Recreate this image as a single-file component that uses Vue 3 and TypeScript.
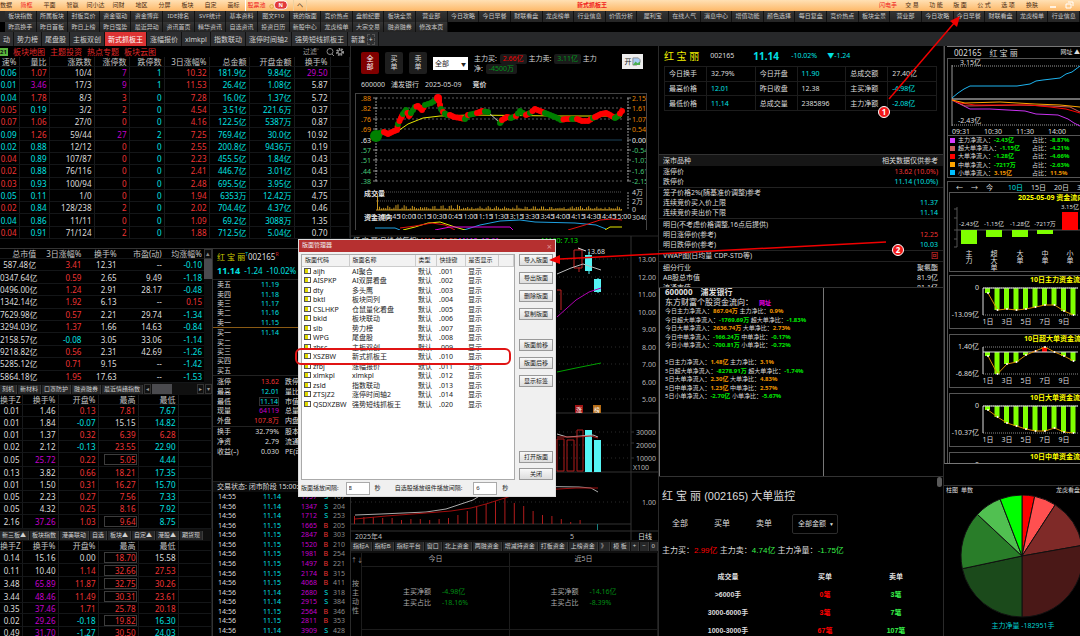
<script setup lang="ts">
import { ref } from 'vue'

interface Cell { tone: string; text: string }
interface Board { name: string; widths: number[]; heads: string[]; rows: Cell[][] }

const tones: Record<string, string> = { r: 'up', c: 'down', p: 'hot', w: 'flat', b: 'up boxed' }
const parse = (src: string): Cell[][] =>
  src.trim().split('\n').map((line) =>
    line.trim().split(' ').map((s) => ({ tone: tones[s[0]], text: s.slice(1) })),
  )

const menu = ['简框', '平面', '智赢', '问小达', '问财', '地区', '分屏', '板块', '自定', '画标']
const menuRight = ['交 易', '功 能', '版 面', '公 式', '选 项', '换肤']

const links1 = [
  '板块指数', '所属板块', '封板竞价', '资金驱动', '资金博弈', 'IDE排名', 'SVF统计', '基本资料', '图文F10', '我的版面',
  '竞价热点', '盘前纪要', '板块全景', '营业部', '今日攻略', '今日早餐', '财联看盘', '龙虎榜单', '行业信息', '价值分析',
  '犀利宝', '在线人气', '消息中心', '增值功能', '颜色选择', '每日复盘', '竞价热点', '板块全景', '营业部', '今日攻略',
  '今日早餐', '财联看盘', '龙虎榜单', '行业信息',
]
const links2 = [
  '昨高换手', '昨日首板', '昨日上榜', '昨日强势', '最近异动', '资讯首页', '精华资讯', '自选资讯', '投资日历', '新股中心',
  '龙虎榜单', '大宗交易', '融资融券', '修改本页',
]
const pages = ['动', '势力榜', '尾盘股', '主板双创', '新式抓板王', '涨幅报价', 'xlmkpl', '指数联动', '涨停时间轴2', '强势短线抓板王']
const activePage = ref('新式抓板王')

const sectorBoard: Board = {
  name: '板块排行',
  widths: [19, 30, 45, 35, 35, 45, 40, 45, 36],
  heads: ['速%', '量比', '涨跌数', '涨停数', '跌停数', '3日涨幅%', '总金额', '开盘金额', '换手%'],
  rows: parse(`
    c0.06 r1.07 w10/4 p7 c1 r10.32 c181.9亿 c9.84亿 p29.50
    c0.01 p3.46 w17/3 p9 c1 r11.53 c26.4亿 c1.08亿 w5.87
    c0.04 r1.78 w8/3 r3 c0 r7.28 c16.0亿 c1.37亿 w5.72
    r0.05 c0.19 w3/2 r2 c0 r4.54 c3.51亿 c221.6万 w0.37
    r0.07 r1.06 w27/0 r0 c0 r4.16 c122.5亿 c5387万 w0.87
    c0.09 r1.26 w59/44 p27 c2 r7.25 c769.4亿 c30.0亿 w10.92
    c0.02 c0.88 w12/12 r0 c0 r2.55 c200.8亿 c9436万 w0.19
    r0.04 c0.89 w107/87 r0 c0 r2.23 c455.5亿 c1.84亿 w0.43
    r0.02 c0.88 w76/116 r0 c0 r2.41 c446.7亿 c3.01亿 w0.43
    r0.03 c0.93 w100/94 r0 c0 r2.48 c695.5亿 c3.95亿 w0.37
    c0.05 c0.11 w1/0 r0 c0 r1.94 c6353万 c12.42万 w4.75
    r0.02 c0.84 w128/238 r2 c0 r2.02 c704.4亿 c4.37亿 w0.46
    c0.04 c0.86 w11/11 r0 c0 r1.09 c69.2亿 c3088万 w1.35
    r0.04 c0.91 w71/124 r2 c0 r1.88 c712.5亿 c5.04亿 w0.70`),
}

const indexBoard: Board = {
  name: '指数',
  widths: [38, 45, 35, 45, 40],
  heads: ['总市值', '3日涨幅%', '换手%', '市盈(动)', '均涨幅%'],
  rows: parse(`
    w587.48亿 r3.41 w12.31 w-- c-0.10
    w0347.64亿 r0.59 w2.65 w9.49 c-1.18
    w0496.00亿 r1.24 w2.91 w28.17 c-0.48
    w1342.14亿 r1.92 w6.13 w-- r0.15
    w7629.98亿 r0.57 w2.21 w29.74 c-1.34
    w3294.03亿 r1.37 w1.66 w14.63 c-0.84
    w2158.57亿 c-0.08 w3.05 w33.06 c-1.14
    w9218.82亿 r0.56 w2.31 w42.69 c-1.26
    w5285.12亿 r0.71 w9.15 w-- c-1.42
    w5864.18亿 r1.95 w17.63 w-- c-1.53`),
}

const turnoverWidths = [22, 36, 40, 40, 40]
const turnoverHeads = ['换手Z', '换手%', '开盘%', '最高', '最低']
const conceptBoard: Board = {
  name: '概念股',
  widths: turnoverWidths,
  heads: turnoverHeads,
  rows: parse(`
    w0.01 w1.46 r0.13 r7.81 c7.67
    w0.01 w1.84 c-0.07 w15.15 c14.82
    w0.01 w1.37 r0.32 r6.39 r6.28
    w0.02 w2.12 c-0.13 r23.55 c22.90
    w0.05 p25.72 r0.22 b5.05 c4.44
    w0.13 w3.82 r0.66 r18.21 c17.35
    w0.01 w1.50 r0.31 r16.27 c15.70
    w0.05 w2.23 r0.27 r7.56 c7.33
    w0.05 w4.32 r0.25 r8.16 c7.92
    w2.16 p37.26 r1.03 b9.64 c8.75`),
}
const watchBoard: Board = {
  name: '自选股',
  widths: turnoverWidths,
  heads: turnoverHeads,
  rows: parse(`
    w0.14 w15.16 w0.00 b18.70 w15.58
    w0.11 w10.40 r1.14 b32.66 r27.53
    w3.48 p65.89 r11.87 b32.75 r30.26
    w3.44 p48.46 r11.49 b30.31 r23.61
    w0.35 p37.46 r1.71 r25.78 r20.18
    w0.02 p29.26 c-0.18 b19.82 c16.30
    w0.49 p31.70 c-1.27 r30.50 c24.03`),
}
const lowerBoards = [
  { board: indexBoard, tabs: ['刻机', '新材料', '口罩防护', '融资融券', '最近情绪指数'], scroll: true },
  { board: conceptBoard, tabs: ['新三板▲', '板块指数', '港美联动', '自选', '板块▲', '自定▲', '港股▲', '期货现'], scroll: false },
  { board: watchBoard, tabs: [] as string[], scroll: false },
]

const asks = [['卖五', '11.19'], ['卖四', '11.18'], ['卖三', '11.17'], ['卖二', '11.16'], ['卖一', '11.15']]
const bids = [['买一', '11.14'], ['买二', ''], ['买三', ''], ['买四', ''], ['买五', '']]
const stats1 = [
  ['涨停', '13.62', 'up', '跌停'], ['最高', '12.01', 'down', '量比'], ['最低', '11.14', 'down boxed', '市值'],
  ['现量', '64119', 'hot', '总量'], ['外盘', '107.8万', 'up', '内盘'],
]
const stats2 = [['换手', '32.79%', 'flat', '股本'], ['净资', '2.79', 'flat', '流通'], ['收益(–)', '0.030', 'flat', 'PE(动)']]
const ticks = [
  ['14:55', '11.14', '1757', 'S', '167'], ['14:56', '11.14', '1347', 'S', '204'], ['14:56', '11.14', '1712', 'S', '253'],
  ['14:56', '11.15', '1665', 'B', '205'], ['14:56', '11.15', '2847', 'B', '303'], ['14:56', '11.15', '1520', 'B', '210'],
  ['14:56', '11.15', '1981', 'B', '254'], ['14:56', '11.15', '1497', 'B', '221'], ['14:56', '11.15', '2174', 'B', '315'],
  ['14:56', '11.15', '4068', 'B', '411'], ['14:56', '11.14', '2680', 'S', '318'], ['14:56', '11.14', '2915', 'S', '384'],
  ['14:56', '11.15', '2564', 'B', '346'], ['14:56', '11.15', '2811', 'B', '353'], ['14:56', '11.14', '3909', 'S', '428'],
]

// Intraday price trace: way points joined by overlapping trade dots
type Way = [number, number, string]
const R = '#ff0000'
const G = '#008000'
const ways: Way[] = [
  [376, 136, G], [380, 133, G], [384, 132, R], [388, 134, R], [392, 132, R], [397, 130, R], [398, 124, G], [401, 118, R],
  [403, 114, G], [406, 110, G], [409, 116, R], [411, 113, G], [415, 107, G], [418, 106, R], [422, 110, R], [425, 105, G],
  [431, 103, G], [436, 100, G], [438, 98, R], [439, 101, R], [441, 109, G], [443, 112, R], [447, 115, G], [450, 115, R],
  [454, 117, R], [460, 118, R], [465, 119, G], [468, 115, R], [473, 114, G], [477, 113, R], [482, 111, R], [488, 112, G],
  [500, 123, G], [502, 120, R], [507, 117, R], [511, 118, G], [516, 116, R], [520, 111, G], [526, 115, R], [530, 113, G],
  [535, 109, R], [540, 111, R], [545, 113, G], [550, 115, G], [555, 117, G], [561, 120, G], [566, 119, R], [572, 119, G],
  [577, 119, R], [582, 121, R], [588, 121, R], [593, 118, G], [597, 116, R], [601, 114, R], [606, 113, R], [610, 115, R],
  [615, 118, G], [618, 116, G], [622, 111, R],
]
const dots = ways.flatMap(([x, y, c], i) => {
  const n = ways[i + 1]
  const out = [{ x, y, c, r: i === 0 ? 6 : i === 18 ? 4 : 3 }]
  if (n && n[0] - x < 8) out.push({ x: (x + n[0]) / 2, y: (y + n[1]) / 2, c: i % 3 ? c : n[2], r: 3 })
  return out
})
const gridLabels = [
  [98, '.88', '2.15', '#e88600'], [108, '.82', '1.61', '#e88600'], [119, '.76', '1.07', '#e88600'], [129, '.69', '0.54', '#e88600'],
  [140, '.63', '0.00', '#eeeeee'], [150, '.57', '-0.54', '#46c878'], [160, '.51', '-1.07', '#46c878'], [171, '.44', '-1.61', '#46c878'],
  [181, '.38', '-2.15', '#46c878'],
] as [number, string, string, string][]
const times = ['09:30', '09:45', '10:00', '10:15', '10:30', '10:45', '11:00', '11:15', '11:30', '13:15', '13:30', '13:45', '14:00', '14:15', '14:30', '14:45', '15:00']
const volumes = Array.from({ length: 120 }, (_, i) => {
  const wave = Math.abs(Math.sin(i * 2.3) * Math.cos(i * 0.7))
  return { x: 377 + i * 2.05, h: i === 0 ? 16 : 1 + wave * (i < 45 ? 4 : 3) + (i % 29 === 10 ? 2 : 0) }
})

const prices = ['13.00', '12.00', '11.00', '10.00', '9.00', '8.00', '7.00', '6.00', '5.00']
const macd = [8, 7, 7, 6, 6, 4, 5, 5, 4, 5, 6, 9, 13, 17, 20, 23, 26, 21, 18, 13, 9, 8, 5, 2, 4]
const funds = ['指标A', '指标B', '指标平台', '窗口', '北上资金', '两融资金', '增减持资金', '打板资金', '上榜资金', '》']
const fundDays = [
  { day: '今日', net: '-4.98亿', ratio: '-18.16%' },
  { day: '近5日', net: '-14.16亿', ratio: '-8.39%' },
]

const summary = [
  [['今日换手', '32.79%', 'flat'], ['今日开盘', '11.90', 'down'], ['总成交额', '27.40亿', 'flat']],
  [['最高价格', '12.01', 'down'], ['昨日收盘', '12.38', 'flat'], ['主买净额', '-4.98亿', 'down']],
  [['最低价格', '11.14', 'down'], ['总成交量', '2385896', 'flat'], ['主力净额', '-2.08亿', 'down']],
]
const rules = [
  [['涨停价', '13.62 (10.0%)', 'up'], ['跌停价', '11.14 (10.0%)', 'down']],
  [['笼子价格2%(随基准价调整)参考', '', ''], ['连续竞价买入价上限', '11.37', 'down'], ['连续竞价卖出价下限', '11.14', 'down']],
  [['明日(不考虑价格调整,16点后提供)', '', ''], ['明日涨停价(参考)', '12.25', 'up'], ['明日跌停价(参考)', '10.03', 'down']],
  [['VWAP图(日均量 CDP-STD等)', '回', 'up']],
  [['细分行业', '聚氨酯', 'flat'], ['AB股总市值', '81.9亿', 'flat'], ['流通市值', '81.1亿', 'flat']],
]
const inflows = [
  ['今日主力净流入：', '867.04万', '主力净比：', '0.9%'], ['今日超大单净流入：', '-1769.69万', '超大单净比：', '-1.83%'],
  ['今日大单净流入：', '2636.74万', '大单净比：', '2.73%'], ['今日中单净流入：', '-166.24万', '中单净比：', '-0.17%'],
  ['今日小单净流入：', '-700.81万', '小单净比：', '-0.72%'], ['', '', '', ''],
  ['5日主力净流入：', '1.48亿', '主力净比：', '3.1%'], ['5日超大单净流入：', '-8278.91万', '超大单净比：', '-1.74%'],
  ['5日大单净流入：', '2.30亿', '大单净比：', '4.83%'], ['5日中单净流入：', '1.23亿', '中单净比：', '2.57%'],
  ['5日小单净流入：', '-2.70亿', '小单净比：', '-5.67%'],
]
const sign = (v: string) => (v.startsWith('-') ? 'lime' : 'amber')
const orders = [['>6000手', '0笔', '3笔'], ['3000-6000手', '3笔', '7笔'], ['1000-3000手', '67笔', '107笔']]

const legend = [
  ['#d83cff', '主力净流入：', '-2.43亿', '-8.87%'], ['#cd5c5c', '超大单净流入：', '-1.15亿', '-4.21%'], ['#ff0000', '大单净流入：', '-1.28亿', '-4.66%'],
  ['#ffa500', '中单净流入：', '-7217万', '-2.63%'], ['#00bfff', '小单净流入：', '3.15亿', '11.5%'],
]
const flowBars = [
  { x: 969, h: 14, v: '-2.43亿', n: '主力' }, { x: 994, h: 7, v: '-1.15亿', n: '超大单' }, { x: 1020, h: 7, v: '-1.28亿', n: '大单' },
  { x: 1045, h: 4, v: '-7217万', n: '中单' }, { x: 1070, h: -18, v: '3.15亿', n: '小单' },
]
const dayCharts = [
  { title: '10日主力资金流向', x: 1030, zero: 12, top: '', low: '-13.09亿', floor: 39, pts: [17, 34, 33, 34, 33, 31, 29, 29, 35, 39] },
  { title: '10日超大单资金流向', x: 1024, zero: 17, top: '1.40亿', low: '-6.86亿', floor: 39, pts: [21, 39, 29, 27, 20, 16, 12, 17, 21, 26] },
  { title: '10日大单资金流向', x: 1030, zero: 12, top: '', low: '-10.37亿', floor: 39, pts: [16, 23, 29, 32, 35, 37, 37, 34, 38, 39] },
]
const dayX = (i: number) => 988 + i * 9.5

const slices = [
  [0, 12, '#ff0000'], [12, 33, '#ff5050'], [33, 80, '#7f2a28'], [80, 180, '#4a1817'],
  [180, 258, '#1b4a1b'], [258, 313, '#297d29'], [313, 339, '#51c051'], [339, 360, '#00ff00'],
] as [number, number, string][]
const slicePath = (a: number, b: number) => {
  const p = (d: number) => {
    const t = (d * Math.PI) / 180
    return `${(1022 + 61 * Math.sin(t)).toFixed(2)} ${(556 - 61 * Math.cos(t)).toFixed(2)}`
  }
  return `M1022 556L${p(a)}A61 61 0 0 1 ${p(b)}Z`
}

const layouts = [
  ['aijh', 'AI聚合', '.001'], ['AISPKP', 'AI双屏看盘', '.002'], ['dty', '多头鹰', '.003'], ['bktl', '板块同列', '.004'],
  ['CSLHKP', '仓鼠量化看盘', '.005'], ['bkld', '板块联动', '.006'], ['slb', '势力榜', '.007'], ['WPG', '尾盘股', '.008'],
  ['zbsc', '主板双创', '.009'], ['XSZBW', '新式抓板王', '.010'], ['zfbj', '涨幅报价', '.011'], ['xlmkpl', 'xlmkpl', '.012'],
  ['zsld', '指数联动', '.013'], ['ZTSJZ2', '涨停时间轴2', '.014'], ['QSDXZBW', '强势短线抓板王', '.020'],
]
const actions = [['导入版面', '导出版面', '删除版面', '复制版面'], ['版面前移', '版面后移', '显示标签'], ['打开版面', '关闭']]
const layoutGap = ref('8')
const stockGap = ref('6')
const side = ref('全部')
const amount = ref('全部金额')
</script>

<template>
  <div class="app">
    <header class="titlebar">
      <nav class="menu">
        <button class="first">数据</button>
        <button v-for="(m, i) in menu" :key="m" :class="{ red: i === 0 }">{{ m }}</button>
        <button class="pool red">股票池</button>
        <svg class="coin" viewBox="0 0 24 12"><circle cx="4" cy="7" r="2" fill="none" stroke="#d9a441" /><rect x="7" y="1" width="14" height="9" rx="4" fill="#e23a3a" stroke="#fff" /><text x="14" y="8" text-anchor="middle" font-size="6" font-weight="700" fill="#fff">N</text></svg>
        <button class="fold">ヘ</button>
      </nav>
      <h1>新式抓板王</h1>
      <nav class="menu right">
        <button class="red">闪电手</button>
        <button v-for="m in menuRight" :key="m">{{ m }}</button>
        <svg class="win" viewBox="0 0 34 11"><path d="M5 7h6" stroke="#fff" stroke-width="1.5" /><path d="M21 4h5v4h-5zM23 2h5v4" fill="none" stroke="#fff" /></svg>
      </nav>
    </header>

    <nav class="links">
      <i></i>
      <a v-for="(l, i) in links1" :key="i" href="#">{{ l }}</a>
    </nav>
    <nav class="links second">
      <i></i>
      <a v-for="l in links2" :key="l" href="#">{{ l }}</a>
    </nav>
    <nav class="pages">
      <button v-for="p in pages" :key="p" :class="{ active: p === activePage }" @click="activePage = p">{{ p }}</button>
      <button>新建 <span class="plus">+</span></button>
    </nav>

    <main class="body">
      <!-- Sector tables and order book -->
      <div class="col left">
        <section class="top-board">
          <div class="maps">
            <b>21</b>
            <a href="#">板块地图</a><a href="#">主题投资</a><a href="#">热点专题</a><a href="#">板块云图</a>
            <span class="filter">过滤˅</span>
            <svg viewBox="0 0 22 10"><circle cx="6" cy="4.5" r="3" fill="none" stroke="#888" /><path d="M8 7l2 2" stroke="#888" /><circle cx="16" cy="5" r="3" fill="none" stroke="#999" stroke-width="2" stroke-dasharray="1.5 1" /><circle cx="16" cy="5" r="2" fill="none" stroke="#999" /></svg>
          </div>
          <table class="grid sector">
            <colgroup><col v-for="(w, i) in sectorBoard.widths" :key="i" :style="{ width: w + 'px' }" /><col /></colgroup>
            <thead><tr><th v-for="h in sectorBoard.heads" :key="h">{{ h }}</th><th></th></tr></thead>
            <tbody>
              <tr v-for="(r, i) in sectorBoard.rows" :key="i"><td v-for="(c, j) in r" :key="j" :class="c.tone">{{ c.text }}</td><td></td></tr>
            </tbody>
          </table>
        </section>

        <div class="lower">
          <section class="stack">
            <template v-for="s in lowerBoards" :key="s.board.name">
              <div class="holder">
                <table class="grid" :class="{ short: !s.tabs.length, plain: s.scroll }">
                  <colgroup><col v-for="(w, i) in s.board.widths" :key="i" :style="{ width: w + 'px' }" /><col v-if="!s.scroll" /></colgroup>
                  <thead><tr><th v-for="h in s.board.heads" :key="h">{{ h }}</th><th v-if="!s.scroll"></th></tr></thead>
                  <tbody>
                    <tr v-for="(r, i) in s.board.rows" :key="i"><td v-for="(c, j) in r" :key="j" :class="c.tone"><span>{{ c.text }}</span></td><td v-if="!s.scroll"></td></tr>
                  </tbody>
                </table>
                <div v-if="s.scroll" class="vbar"><span>▴</span><i></i></div>
              </div>
              <div v-if="s.tabs.length" class="strip">
                <button v-for="t in s.tabs" :key="t">{{ t }}</button>
                <div v-if="s.scroll" class="hbar"><span>◂</span><i></i><span class="end">▸</span><span>▾</span></div>
              </div>
            </template>
          </section>

          <section class="quote">
            <div class="name"><b>红 宝 丽</b><sup>T</sup>002165<sup class="rr">R</sup></div>
            <div class="last"><b>11.14</b><span>-1.24</span><span>-10.02%</span></div>
            <table class="depth"><tbody><tr v-for="a in asks" :key="a[0]"><th>{{ a[0] }}</th><td class="down">{{ a[1] }}</td><td></td></tr></tbody></table>
            <table class="depth mid"><tbody><tr v-for="a in bids" :key="a[0]"><th>{{ a[0] }}</th><td class="down">{{ a[1] }}</td><td></td></tr></tbody></table>
            <table class="depth five"><tbody><tr v-for="a in stats1" :key="a[0]"><th>{{ a[0] }}</th><td :class="a[2]"><span>{{ a[1] }}</span></td><td class="next">{{ a[3] }}</td></tr></tbody></table>
            <table class="depth three"><tbody><tr v-for="a in stats2" :key="a[0]"><th>{{ a[0] }}</th><td :class="a[2]">{{ a[1] }}</td><td class="next">{{ a[3] }}</td></tr></tbody></table>
            <div class="state">交易状态: 闭市阶段 15:00:00</div>
            <table class="ticks">
              <tbody>
                <tr v-for="(t, i) in ticks" :key="i">
                  <td class="flat">{{ t[0] }}</td><td class="down">{{ t[1] }}</td><td class="hot">{{ t[2] }}</td>
                  <td :class="t[3] === 'S' ? 'down' : 'up'">{{ t[3] }}</td><td class="dim">{{ t[4] }}</td>
                </tr>
              </tbody>
            </table>
          </section>
        </div>
      </div>

      <!-- Intraday, daily chart and fund flow -->
      <div class="col middle">
        <section class="intraday">
          <div class="filters">
            <button :class="{ on: side === '全部' }" @click="side = '全部'">全部</button>
            <button :class="{ on: side === '买单' }" @click="side = '买单'">买单</button>
            <button :class="{ on: side === '卖单' }" @click="side = '卖单'">卖单</button>
            <label class="pick"><select aria-label="单量"><option>全部</option></select><span>▼</span></label>
            <p>主力买: <em class="bad">2.66亿</em> 主力卖: <em>3.11亿</em> 主力净: <em>-4500万</em></p>
            <button class="open">开<svg viewBox="0 0 10 10"><path d="M1 1h6l2 2v3L5 9H1z" fill="#a9cdf5" stroke="#8a8a8a" /><path d="M1 9l3-4 2 2 3-2v4z" fill="#4caf50" /></svg></button>
          </div>
          <div class="caption"><span>600000</span><span>浦发银行</span><span>2025-05-09</span><b>竞价</b></div>
          <div class="frame">
            <svg viewBox="356 94 290 136" class="chart">
              <g v-for="g in gridLabels" :key="g[0]">
                <path :d="`M376 ${g[0]}H622`" :stroke="g[0] === 140 ? '#1d4259' : '#5c5c5c'" :stroke-dasharray="g[0] === 140 ? '0' : '2 2'" />
                <path :d="`M373 ${g[0]}h4M627 ${g[0]}h4`" stroke="#888" />
                <text x="371" :y="g[0] + 3" text-anchor="end" :fill="g[3]">{{ g[1] }}</text>
                <text x="632" :y="g[0] + 3" :fill="g[3]">{{ g[2] }}</text>
              </g>
              <path d="M376 98V181M628 98V181M628 192V210" stroke="#999" stroke-dasharray="2 1" />
              <path d="M398 131L408 124L423 118L440 116L470 115L560 116L622 116" fill="none" stroke="#e6e600" />
              <path d="M488 112L500 123M620 118L622 111" stroke="#ccc" />
              <circle v-for="(d, i) in dots" :key="i" :cx="d.x" :cy="d.y" :r="d.r" :fill="d.c" />
              <path d="M376 192H622M376 201H622" stroke="#555" stroke-dasharray="1 1" />
              <rect v-for="v in volumes" :key="v.x" :x="v.x" :y="210 - v.h" width="1" :height="v.h" fill="#c8961e" />
              <path d="M376 210H622" stroke="#c8961e" />
              <text x="364" y="196" font-weight="700" fill="#ddd">成交量</text>
              <text x="632" y="195" fill="#ccc">4万</text><text x="632" y="204" fill="#ccc">2万</text><text x="632" y="212" fill="#ccc">0</text>
              <text x="364" y="220" font-weight="700" fill="#ddd">资金流向</text>
              <text v-for="(t, i) in times" :key="t" :x="376 + i * 15.4" y="219" text-anchor="middle" fill="#ddd">{{ t }}</text>
              <text x="632" y="220" fill="#ccc">3040</text>
              <path d="M375 228L395 228L400 230M464 230L480 225L500 221L520 220L535 222L575 223L596 225L606 229" fill="none" stroke="#1ea0e0" />
              <path d="M403 230L415 227L428 223L440 222L455 227L465 230M605 230L610 227L622 227" fill="none" stroke="#e6e600" />
              <path d="M400 228L415 226L432 223L445 225L455 230M568 230L585 225L600 220L612 219L622 220" fill="none" stroke="#e01010" />
              <path d="M435 230L450 227L470 227H510L513 230" fill="none" stroke="#e000e0" />
            </svg>
          </div>
        </section>

        <svg viewBox="350 235 307 305" class="chart daily">
          <path d="M350 236H658" stroke="#262626" />
          <path d="M350 259H630M350 277H630M350 294H630M350 312H630M350 329H630M350 347H630M350 364H630M350 382H630M350 399H630M350 432H630M350 445H630M350 458H630M350 502H630" stroke="#2a2a2a" stroke-dasharray="1 3" />
          <path d="M630 236V540M350 413H658M350 472H658M350 531H658M630 443H633M630 432H633M630 458H633M350 524H630" stroke="#333" />
          <text x="352" y="243" fill="#ddd">红 宝 丽(日线 前复权) <tspan fill="#e33">MA5: 12.28</tspan> <tspan fill="#e0e">MA10: 10.61</tspan></text>
          <text x="577" y="243" text-anchor="end" fill="#00e000">MA60: 7.13</text>
          <g fill="#b4b4b4"><text v-for="(p, i) in prices" :key="p" x="655" :y="262 + i * 17.5" text-anchor="end">{{ p }}</text></g>
          <path d="M578 248V250M578 267V272M556 290H560V310M573 250H581V268H573z" fill="none" stroke="#c42424" />
          <path d="M577 248L585 251" stroke="#ddd" />
          <text x="586" y="254" fill="#ddd">13.68</text>
          <rect x="584" y="255" width="7" height="16" fill="#55f4f4" /><path d="M588 252V274M597 278V293" stroke="#55f4f4" />
          <rect x="593" y="279" width="7" height="13" fill="#55f4f4" />
          <path d="M556 317L575 300L588 292L600 288" fill="none" stroke="#b000b0" />
          <path d="M556 372L575 368L600 363" fill="none" stroke="#00a000" />
          <path d="M556 274L570 268L582 264L600 270" fill="none" stroke="#bbb" />
          <rect x="574" y="405" width="8" height="8" fill="#a01414" /><text x="578" y="412" text-anchor="middle" font-size="6" fill="#fff">涨</text>
          <rect x="592" y="405" width="8" height="8" fill="#b36a14" /><text x="596" y="412" text-anchor="middle" font-size="6" fill="#fff">榜</text>
          <path d="M556 439H563V471H556zM566 440H573V471H566zM576 430H582V471H576z" fill="none" stroke="#b01c1c" />
          <rect x="584" y="430" width="7" height="42" fill="#55f4f4" /><rect x="593" y="440" width="7" height="32" fill="#55f4f4" />
          <path d="M556 434L566 437L580 436L592 435L597 437" fill="none" stroke="#bbb" />
          <path d="M556 437L576 437L590 436L597 438" fill="none" stroke="#b01c1c" />
          <g fill="#b4b4b4"><text x="655" y="435" text-anchor="end">30000</text><text x="655" y="448" text-anchor="end">20000</text><text x="655" y="461" text-anchor="end">10000</text><text x="632" y="470">X100</text><text x="655" y="505" text-anchor="end">1.00</text></g>
          <rect v-for="(h, i) in macd" :key="i" :x="353 + i * 9.4" :y="524 - h" width="1" :height="h" fill="#b01c1c" />
          <rect x="596" y="524" width="1" height="6" fill="#178080" />
          <path d="M354 515L380 514L425 512L445 509L460 504L472 500L480 495L520 486L578 487L590 488L597 492" fill="none" stroke="#aaa" />
          <path d="M354 519L385 516L425 513L450 511L470 508L485 504L510 496L540 490L575 488L597 488" fill="none" stroke="#a00d0d" />
          <g fill="#bbb"><text x="354" y="539">2025年4</text><text x="569" y="539">5</text><text x="637" y="539" fill="#ddd">日线</text></g>
        </svg>

        <section class="funds">
          <nav class="strip"><button v-for="f in funds" :key="f">{{ f }}</button><button class="tpl">模 板</button><button>+</button><button>−</button><button>0</button></nav>
          <div class="days">
            <div class="side"><button aria-label="排序">↑↓</button><span>按主动性</span></div>
            <div v-for="d in fundDays" :key="d.day" class="day">
              <h2>{{ d.day }}</h2>
              <dl><dt>主买净额</dt><dd>{{ d.net }}</dd><dt>主买占比</dt><dd>{{ d.ratio }}</dd></dl>
            </div>
          </div>
        </section>
      </div>

      <!-- Stock summary -->
      <div class="col info">
        <div class="stock"><b class="cn">红 宝 丽</b><span class="code">002165</span><b class="now">11.14</b><span class="down">-10.02%</span><span class="down">▼-1.24</span></div>
        <table class="summary">
          <tbody>
            <tr v-for="(r, i) in summary" :key="i"><template v-for="c in r" :key="c[0]"><th>{{ c[0] }}</th><td :class="c[2]">{{ c[1] }}</td></template></tr>
          </tbody>
        </table>
        <div class="rules-head"><span>深市品种</span><span>相关数据仅供参考</span></div>
        <div class="rules">
          <div v-for="(g, i) in rules" :key="i" class="group">
            <div v-for="r in g" :key="r[0]" class="rule"><span>{{ r[0] }}</span><span :class="r[2]">{{ r[1] }}</span></div>
          </div>
        </div>
        <section class="web">
          <div class="web-in">
            <h3>600000　浦发银行</h3>
            <h4>东方财富个股资金流向：<a href="#">网址</a></h4>
            <ul>
              <li v-for="(f, i) in inflows" :key="i">{{ f[0] }}<b :class="sign(f[1])">{{ f[1] }}</b> {{ f[2] }}<b :class="sign(f[3])">{{ f[3] }}</b></li>
            </ul>
          </div>
        </section>
        <section class="monitor">
          <i class="knob"></i>
          <h2>红 宝 丽 (002165) 大单监控</h2>
          <div class="tabs">
            <button>全部</button><button>买单</button><button>卖单</button>
            <label><select v-model="amount" aria-label="金额"><option>全部金额</option></select><span>▼</span></label>
          </div>
          <p>主力买：<span class="bad">2.99亿</span> 主力卖：<span class="good">4.74亿</span> 主力净量：<span class="good">-1.75亿</span></p>
          <table>
            <thead><tr><th>成交量</th><th>买单</th><th>卖单</th></tr></thead>
            <tbody><tr v-for="o in orders" :key="o[0]"><td>{{ o[0] }}</td><td class="bad">{{ o[1] }}</td><td class="good">{{ o[2] }}</td></tr></tbody>
          </table>
        </section>
      </div>

      <!-- Fund flow charts -->
      <div class="col flow">
        <div class="flow-in">
          <div class="flow-head"><span>002165</span><span>红 宝 丽</span><a href="#">网址 ▲</a></div>
          <div class="box trend">
            <svg viewBox="948 60 132 76" class="chart">
              <path d="M952 67H1080M952 126H1080" stroke="#999" stroke-dasharray="1 1" />
              <path d="M952 66V127" stroke="#999" /><path d="M952 100H1080" stroke="#ddd" />
              <g fill="none">
                <path d="M952 99L958 94L964 90L970 87L1017 87L1030 85L1036 82L1043 81L1060 79L1066 75L1072 73L1080 67" stroke="#1eb4f0" />
                <path d="M952 101L970 110L990 110L1025 112L1036 115L1058 116L1068 120L1074 124L1080 127" stroke="#c832f0" />
                <path d="M952 101L965 107L1020 106L1050 107L1070 108L1080 113" stroke="#cd5c5c" />
                <path d="M952 101L960 104L975 106L1030 106L1050 108L1066 110L1080 114" stroke="#ff0000" />
                <path d="M952 101L965 104L1000 103L1035 105L1060 106L1080 108" stroke="#ffa500" />
              </g>
              <text x="960" y="66" fill="#ddd">3.15亿</text><text x="958" y="124" fill="#ddd">-2.43亿</text>
              <g fill="#ddd"><text x="952" y="135">09:31</text><text x="984" y="135">10:30</text><text x="1016" y="135">11:30</text><text x="1048" y="135">14:00</text></g>
            </svg>
          </div>
          <ul class="legend">
            <li v-for="l in legend" :key="l[1]">
              <i :style="{ background: l[0] }"></i><span>{{ l[1] }}<b :class="sign(l[2])">{{ l[2] }}</b></span><span>占比：<b :class="sign(l[3])">{{ l[3] }}</b></span>
            </li>
          </ul>
          <div class="box flows">
            <nav><button>←</button><button>→</button><button>今</button><button class="down">10日</button><button>15日</button><button>20日</button><button>30日</button></nav>
            <div class="box card">
              <svg viewBox="950 194 130 78" class="chart">
                <text x="1018" y="201" font-weight="700" fill="#ffff00">2025-05-09 资金流向</text>
                <path d="M957 208V248M954 210h3M954 219h3M954 231H1080M954 240h3M954 248h3" stroke="#555" />
                <g v-for="b in flowBars" :key="b.n">
                  <rect :x="b.x - 8" :y="b.h < 0 ? 231 + b.h : 231" width="16" :height="Math.abs(b.h)" :fill="b.h < 0 ? '#ff0000' : '#7fff00'" />
                  <text :x="b.x" :y="b.h < 0 ? 210 : 227" text-anchor="middle" font-size="6" fill="#ddd">{{ b.v }}</text>
                  <text v-for="(ch, k) in b.n" :key="k" :x="b.x" :y="257 + Number(k) * 7" text-anchor="middle" fill="#ddd">{{ ch }}</text>
                </g>
              </svg>
            </div>
            <div v-for="d in dayCharts" :key="d.title" class="box card">
              <svg viewBox="950 0 130 52" class="chart">
                <text :x="d.x" y="6" font-weight="700" fill="#ffff00">{{ d.title }}</text>
                <path :d="`M983 ${d.floor}H1078M983 12H1078`" stroke="#888" stroke-dasharray="1 1" />
                <rect v-for="(p, i) in d.pts" :key="i" :x="dayX(i) - 3" :y="Math.min(p, d.zero)" width="5" :height="Math.abs(p - d.zero)" :fill="p < d.zero ? '#ff0000' : '#7fff00'" />
                <path :d="`M983 12V${d.floor}M983 ${d.zero}H1078`" stroke="#ddd" />
                <polyline :points="d.pts.map((p, i) => `${dayX(i)},${p}`).join(' ')" fill="none" stroke="#d99000" />
                <circle v-for="(p, i) in d.pts" :key="i" :cx="dayX(i)" :cy="p" r="1" fill="#fff" />
                <g fill="#ddd" text-anchor="end"><text x="979" y="14">{{ d.top || '0' }}</text><text x="979" y="41">{{ d.low }}</text></g>
                <g fill="#ddd" text-anchor="middle"><text v-for="n in [1, 3, 5, 7, 9]" :key="n" :x="dayX(n - 1)" y="48">{{ n }}日</text></g>
              </svg>
            </div>
            <div class="box card">
              <svg viewBox="950 0 130 52" class="chart"><text x="1030" y="6" font-weight="700" fill="#ffff00">10日中单资金流向</text><text x="979" y="14" text-anchor="end" fill="#ddd">0</text></svg>
            </div>
          </div>
        </div>
        <div class="pie-head"><button>柱图</button><button>单数</button><a href="#">龙虎看盘</a></div>
        <svg viewBox="944 495 136 126" class="chart">
          <path v-for="s in slices" :key="s[0]" :d="slicePath(s[0], s[1])" :fill="s[2]" stroke="#111" stroke-width="1" />
        </svg>
        <div class="pie-label">主力净量 -182951手</div>
      </div>
    </main>

    <!-- Layout manager window -->
    <div class="dialog" role="dialog" aria-label="版面管理器">
      <div class="dialog-title"><span>版面管理器</span><button aria-label="关闭窗口">×</button></div>
      <div class="dialog-body">
        <div class="list">
          <table>
            <colgroup><col class="c1" /><col class="c2" /><col class="c3" /><col class="c4" /><col class="c5" /><col /></colgroup>
            <thead><tr><th>版面代码</th><th>版面名称</th><th>类型</th><th>快捷键</th><th>是否显示</th><th></th></tr></thead>
            <tbody>
              <tr v-for="l in layouts" :key="l[0]">
                <td><svg viewBox="0 0 7 6"><rect x="0.5" y="0.5" width="6" height="5" fill="#fff" stroke="#555" /><rect x="1" y="1" width="3" height="4" fill="#e0d800" /></svg>{{ l[0] }}</td>
                <td>{{ l[1] }}</td><td>默认</td><td>{{ l[2] }}</td><td>显示</td><td></td>
              </tr>
            </tbody>
          </table>
        </div>
        <div class="actions">
          <div v-for="(g, i) in actions" :key="i" :class="'g' + i"><button v-for="a in g" :key="a">{{ a }}</button></div>
        </div>
      </div>
      <div class="dialog-foot">
        <label for="lg">版面播放间隔:</label><input id="lg" v-model="layoutGap" /><span>秒</span>
        <label for="sg" class="second">自选股播放组件播放间隔:</label><input id="sg" v-model="stockGap" /><span>秒</span>
      </div>
    </div>

    <!-- Numbered callouts -->
    <svg class="marks" viewBox="0 0 1080 636">
      <rect x="296" y="349" width="214" height="15" rx="5" fill="none" stroke="#e01414" stroke-width="2" />
      <path d="M889 99L955 22" stroke="#f00000" stroke-width="1.5" /><path d="M960 16L957 27L950 21z" fill="#f00000" />
      <path d="M886 242L560 259" stroke="#f00000" stroke-width="1.5" /><path d="M549 260L560 255L560 264z" fill="#f00000" />
      <g font-size="8" font-weight="700" fill="#fff" text-anchor="middle">
        <circle cx="884" cy="112" r="5.5" fill="#f01818" stroke="#fff" /><text x="884" y="115">1</text>
        <circle cx="898" cy="250" r="5.5" fill="#f01818" stroke="#fff" /><text x="898" y="253">2</text>
      </g>
    </svg>
  </div>
</template>

<style>
html, body { background: #000; }
</style>

<style scoped>
.app { position: relative; height: 100vh; display: flex; flex-direction: column; overflow: hidden; background: #000; color: #dcdcdc; font: 7px/10px "Noto Sans", "Noto Sans CJK SC", sans-serif; white-space: nowrap; }
.app * { box-sizing: border-box; }
button, select, input { font: inherit; color: inherit; background: none; border: 0; padding: 0; margin: 0; white-space: nowrap; line-height: inherit; }
a { color: inherit; text-decoration: none; }
h1, h2, h3, h4, p, ul, dl, dd { margin: 0; padding: 0; font: inherit; list-style: none; }
table { border-collapse: collapse; table-layout: fixed; }
th, td { padding: 0; font-weight: 400; line-height: 9px; }
.up { color: #ee3434; }
.down { color: #00e0e0; }
.hot { color: #c400cc; }
.flat { color: #dcdcdc; }
.dim { color: #8a8a8a; }
.red { color: #f02020; }
.bad { color: #ff0000; }
.good { color: #38f04a; }
.lime { color: #00e800; }
.amber { color: #f09600; }
.chart { display: block; width: 100%; height: auto; font-size: 7px; overflow: hidden; }

.titlebar { display: grid; grid-template-columns: 1fr auto 1fr; flex: none; height: 11px; background: linear-gradient(#ffe0b4, #fdb868); color: #4a2a10; font-size: 6px; line-height: 11px; }
.titlebar h1 { color: #f02020; font-weight: 700; padding-left: 104px; }
.menu { display: flex; }
.menu button { width: 23px; flex: none; text-align: center; }
.menu .first { width: 15px; text-align: left; }
.menu .red { color: #f02020; }
.menu .pool { width: 22px; border-left: 1px solid #fff; }
.coin { width: 24px; height: 11px; }
.menu .fold { width: 14px; border: 1px solid #eed0a0; border-width: 0 1px; margin-left: 2px; }
.menu.right { justify-content: flex-end; }
.menu.right button { width: 24px; }
.win { width: 36px; height: 11px; }

.links { display: grid; grid-template-columns: 5px repeat(34, minmax(0, 1fr)); flex: none; height: 11px; font-size: 6px; line-height: 10px; text-align: center; background: #2a2a2a; }
.links a { border-right: 1px solid #111; background: linear-gradient(#343434, #242424); color: #c8c8c8; }
.links.second { height: 10px; background: #000; }
.pages { display: flex; flex: none; height: 14px; background: #27282a; line-height: 13px; }
.pages button { padding: 0 3px; border-right: 1px solid #111; background: #2e2f31; color: #d0d0d0; }
.pages .active { background: #dd3333; color: #fff; }
.plus { border: 1px dashed #555; padding: 0 1px; line-height: 6px; }

.body { flex: 1; min-height: 0; display: grid; grid-template-columns: 350fr 308fr 285fr 137fr; }
.col { min-width: 0; min-height: 0; overflow: hidden; display: flex; flex-direction: column; border-left: 1px solid #2a2a2a; }
.left { border-left: 0; }

.top-board { flex: none; padding-bottom: 9px; border-bottom: 1px solid #333; }
.maps { display: flex; height: 11px; align-items: center; gap: 5px; color: #e02828; font-size: 8px; }
.maps b { width: 8px; background: #5ab53c; color: #111; font-size: 6px; line-height: 8px; overflow: hidden; }
.maps .filter { margin-left: auto; font-size: 7px; color: #999; }
.maps svg { width: 22px; height: 10px; margin-right: 4px; }
.grid { width: 100%; height: 134px; font-size: 8px; text-align: right; }
.grid th, .grid td { border-right: 1px solid #181a1c; border-bottom: 1px solid #141618; padding-right: 2px; overflow: hidden; }
.grid th { color: #c4c4c4; }
.grid.sector { height: 182px; }
.grid.short { height: 97px; }
.grid.plain th, .grid.plain td { border-right: 0; }
.grid .boxed span { display: block; margin: 0 0 0 5px; border: 1px solid #3c3c3c; }
.grid .boxed { padding-right: 1px; }
.lower { flex: 1; min-height: 0; display: flex; }
.stack { flex: none; width: 212px; overflow: hidden; }
.holder { display: flex; }
.vbar { flex: none; width: 8px; background: #0c0c0c; text-align: center; color: #888; }
.vbar span { display: block; border: 1px solid #333; line-height: 8px; }
.vbar i { display: block; height: 20px; background: #4a4a4e; }
.strip { display: flex; align-items: center; height: 12px; gap: 1px; background: #101010; overflow: hidden; font-size: 6px; }
.strip button { background: #262728; padding: 0 2px; line-height: 9px; color: #d0d0d0; border-right: 1px solid #3a3a3a; }
.hbar { flex: 1; display: flex; gap: 1px; line-height: 8px; color: #999; }
.hbar span { width: 7px; border: 1px solid #333; text-align: center; }
.hbar i { width: 20px; background: #4a4a4e; }
.hbar .end { margin-left: auto; }

.quote { flex: 1; min-width: 0; overflow: hidden; border-left: 1px solid #333; }
.name { height: 15px; line-height: 16px; padding-left: 4px; font-size: 8px; }
.name b { color: #d0d000; font-weight: 400; }
sup { font-size: 5px; color: #00c4c4; line-height: 1px; }
sup.rr { color: #d02626; }
.last { display: flex; gap: 4px; height: 15px; line-height: 14px; padding-left: 4px; color: #00e0e0; font-size: 8px; }
.last b { font-size: 9px; }
.depth { width: 100%; height: 48px; border-top: 1px solid #222; }
.depth.mid { border-top-color: #8a5a14; }
.depth.five { height: 51px; }
.depth.three { height: 30px; }
.depth th { width: 34px; padding-left: 4px; text-align: left; overflow: visible; }
.depth td { width: 32px; text-align: right; }
.depth td:last-child { width: auto; }
.depth .next { text-align: left; padding-left: 6px; }
.depth .boxed span { border: 1px solid #333; display: inline-block; line-height: 7px; }
.state { margin-top: 25px; height: 11px; padding-left: 4px; border-top: 1px solid #222; background: #0c0c0c; }
.ticks { width: 132px; height: 143px; }
.ticks td { width: 23px; text-align: right; }
.ticks td:nth-child(2) { width: 45px; }
.ticks td:nth-child(3) { width: 36px; }
.ticks td:nth-child(4) { width: 11px; }
.ticks td:nth-child(5) { width: 17px; }

.intraday { flex: none; height: 189px; padding: 5px 11px 0 4px; }
.filters { display: flex; align-items: flex-start; gap: 6px; padding-left: 6px; height: 26px; }
.filters > button { flex: none; width: 18px; height: 22px; margin-top: 1px; padding: 0 4px; white-space: normal; line-height: 8px; background: #1e1e1e; border-radius: 2px; }
.filters > .on { background: #800000; color: #fff; }
.pick { display: flex; flex: none; align-items: center; width: 35px; height: 13px; margin: 6px 0 0; padding: 0 2px; background: #fff; color: #222; }
.pick select { flex: 1; min-width: 0; appearance: none; }
.pick span { font-size: 5px; }
.filters p { width: 128px; margin-top: 3px; white-space: normal; line-height: 10px; color: #d8d8d8; }
.filters em { display: inline-block; padding: 0 3px; margin-left: 1px; border-radius: 2px; background: #1a1a1a; color: #00961a; font-style: normal; line-height: 10px; }
.filters em.bad { color: #f00000; }
.filters > .open { display: flex; align-items: center; justify-content: center; width: 21px; height: 15px; margin: 3px 4px 0 auto; padding: 0; border-radius: 0; background: #eee; color: #222; }
.open svg { width: 9px; height: 9px; }
.caption { display: flex; gap: 6px; padding-left: 6px; height: 16px; line-height: 16px; color: #d8d8d8; }
.caption b { margin-left: 5px; }
.frame { border: 1px solid #444; border-bottom: 0; overflow: hidden; }
.daily { flex: none; }

.funds { flex: 1; min-height: 0; display: flex; flex-direction: column; }
.funds .strip { flex: none; height: 13px; color: #ddd; }
.funds .tpl { margin-left: auto; }
.days { flex: 1; display: grid; grid-template-columns: 11px 1fr 1fr; min-height: 0; }
.side { display: flex; flex-direction: column; border-right: 1px solid #1c1c1c; color: #999; }
.side span { width: 8px; margin: 13px auto 0 1px; white-space: normal; line-height: 9px; }
.side button { height: 13px; font-size: 6px; }
.day { border-right: 1px solid #1c1c1c; }
.day h2 { height: 14px; line-height: 12px; text-align: center; border-bottom: 1px solid #1c1c1c; color: #aaa; }
.day dl { display: grid; grid-template-columns: auto auto; justify-content: center; column-gap: 11px; padding: 19px 0 21px; line-height: 11px; color: #aaa; border-bottom: 1px solid #1c1c1c; }
.day dd { color: #008c14; }

.stock { display: flex; align-items: center; flex: none; height: 20px; padding-left: 5px; font-size: 7px; }
.cn { color: #f0f000; font-size: 10px; font-weight: 400; margin-right: 11px; }
.code { width: 43px; }
.now { width: 38px; color: #00e0e8; font-size: 10px; }
.stock .down { margin-right: 10px; }
.summary { flex: none; width: auto; margin: 0 6px 0 5px; height: 45px; }
.summary th, .summary td { border: 1px solid #1c1c1c; text-align: left; padding-left: 4px; }
.summary th { width: 42px; }
.summary td { width: 49px; }
.rules-head { display: flex; justify-content: space-between; flex: none; margin-top: 43px; height: 12px; padding: 0 5px 0 4px; border-top: 1px solid #333; background: #161616; line-height: 11px; }
.rules { flex: none; height: 122px; overflow: hidden; padding-top: 1px; border-bottom: 1px solid #333; }
.group + .group { border-top: 1px solid #222; }
.group:nth-child(3), .group:nth-child(5) { padding-top: 1px; }
.rule { display: flex; justify-content: space-between; padding: 0 5px 0 4px; }
.web { flex: none; height: 189px; border-bottom: 1px solid #333; }
.web-in { width: 165px; height: 100%; overflow: hidden; border: 1px solid #777; border-width: 0 1px; padding-left: 5px; }
.web h3 { font-size: 8px; font-weight: 700; line-height: 7px; color: #ddd; }
.web h4 { font-size: 8px; line-height: 14px; height: 12px; color: #e4e4e4; }
.web h4 a { color: #e000e0; font-size: 6px; font-weight: 700; margin-left: 6px; }
.web ul { display: grid; grid-auto-rows: 1fr; height: 94px; font-size: 6px; line-height: 8px; }
.monitor { position: relative; flex: 1; min-height: 0; overflow: hidden; padding-left: 3px; font-family: "Liberation Sans", "Noto Sans CJK SC", sans-serif; font-size: 8px; }
.knob { position: absolute; right: 1px; top: 0; width: 5px; height: 10px; border-radius: 3px; background: #5a5a5a; }
.monitor h2 { font-size: 11px; line-height: 16px; padding-top: 11px; }
.tabs { display: flex; align-items: center; height: 20px; margin-top: 10px; gap: 26px; padding-left: 10px; }
.tabs label { display: flex; align-items: center; width: 46px; height: 20px; margin-left: -6px; padding: 0 3px 0 5px; border: 1px solid #2c2c2c; border-radius: 2px; }
.tabs select { flex: 1; min-width: 0; appearance: none; font-size: 7px; }
.tabs option { background: #000; }
.tabs label span { font-size: 5px; }
.monitor p { margin-top: 12px; }
.monitor table { width: 274px; margin-top: 11px; font-size: 7px; font-weight: 700; text-align: center; }
.monitor th { height: 18px; font-weight: 700; color: #ddd; }
.monitor td { height: 18px; font-weight: 700; }
.monitor th:nth-child(1) { width: 132px; }
.monitor th:nth-child(2) { width: 62px; }

.flow-in { flex: none; height: 418px; overflow: hidden; border-bottom: 1px solid #777; border-left: 1px solid #555; padding-left: 2px; }
.flow-head { display: flex; gap: 8px; height: 12px; line-height: 11px; padding-left: 7px; font-size: 8px; border-top: 1px solid #777; }
.flow-head a { margin-left: auto; font-size: 6px; }
.box { border: 1px solid #555; border-right: 0; }
.trend { height: 78px; overflow: hidden; }
.legend { display: grid; grid-auto-rows: 1fr; height: 42px; border: 1px solid #555; border-width: 0 0 1px 1px; font-size: 6px; line-height: 8px; }
.legend li { display: grid; grid-template-columns: 6px 72px 1fr; column-gap: 2px; align-items: center; padding-left: 2px; }
.legend i { width: 5px; height: 5px; }
.flows { margin-top: 3px; padding-left: 1px; }
.flows nav { display: flex; gap: 8px; height: 10px; line-height: 9px; padding-left: 7px; overflow: hidden; }
.flows nav .down { margin-left: 7px; }
.card { margin-bottom: 3px; overflow: hidden; }
.card + .card { margin-bottom: 5px; }
.pie-head { display: flex; gap: 3px; margin-top: 21px; height: 10px; padding-left: 2px; border-top: 1px solid #333; font-size: 6px; line-height: 9px; color: #ddd; }
.pie-head a { margin-left: auto; }
.pie-label { text-align: center; padding-left: 22px; color: #00d0d0; }

.dialog { position: absolute; left: 298px; top: 239px; width: 258px; border: 1px solid #ddd; background: #f0f0f0; color: #222; }
.dialog-title { display: flex; justify-content: space-between; height: 12px; padding: 0 3px; line-height: 11px; background: #b63030; color: #eee; font-size: 6px; }
.dialog-title button { font-size: 9px; color: #e09090; }
.dialog-body { display: flex; padding: 2px 2px 1px; }
.list { width: 215px; height: 226px; background: #fff; border: 1px solid #aaa; }
.list table { width: 100%; height: 154px; }
.list th, .list td { text-align: left; padding-left: 3px; }
.list thead th { height: 11px; background: #f2f2f2; border-right: 1px solid #ccc; border-bottom: 1px solid #ccc; font-size: 6px; }
.list svg { width: 7px; height: 6px; margin-right: 2px; }
.list td:first-child { padding-left: 2px; }
.c1 { width: 47px; }
.c2 { width: 66px; }
.c3 { width: 21px; }
.c4 { width: 29px; }
.c5 { width: 33px; }
.actions { flex: 1; display: flex; flex-direction: column; padding: 0 0 0 4px; }
.actions div { display: flex; flex-direction: column; gap: 6px; }
.actions button { width: 34px; height: 12px; border: 1px solid #999; background: linear-gradient(#f8f8f8, #ddd); font-size: 6px; line-height: 9px; text-align: center; }
.actions .g1 { margin-top: 19px; }
.actions .g2 { margin-top: auto; gap: 5px; }
.dialog-foot { display: flex; align-items: center; height: 15px; padding: 0 2px 1px; font-size: 6px; }
.dialog-foot input { width: 24px; height: 13px; margin: 0 5px 0 7px; padding: 0 2px; border: 1px solid #aaa; background: #fff; }
.dialog-foot .second { margin-left: 14px; }
.dialog-foot input#sg { margin-left: 11px; }
.marks { position: absolute; left: 0; top: 0; width: 1080px; max-width: none; height: 636px; pointer-events: none; }
</style>
